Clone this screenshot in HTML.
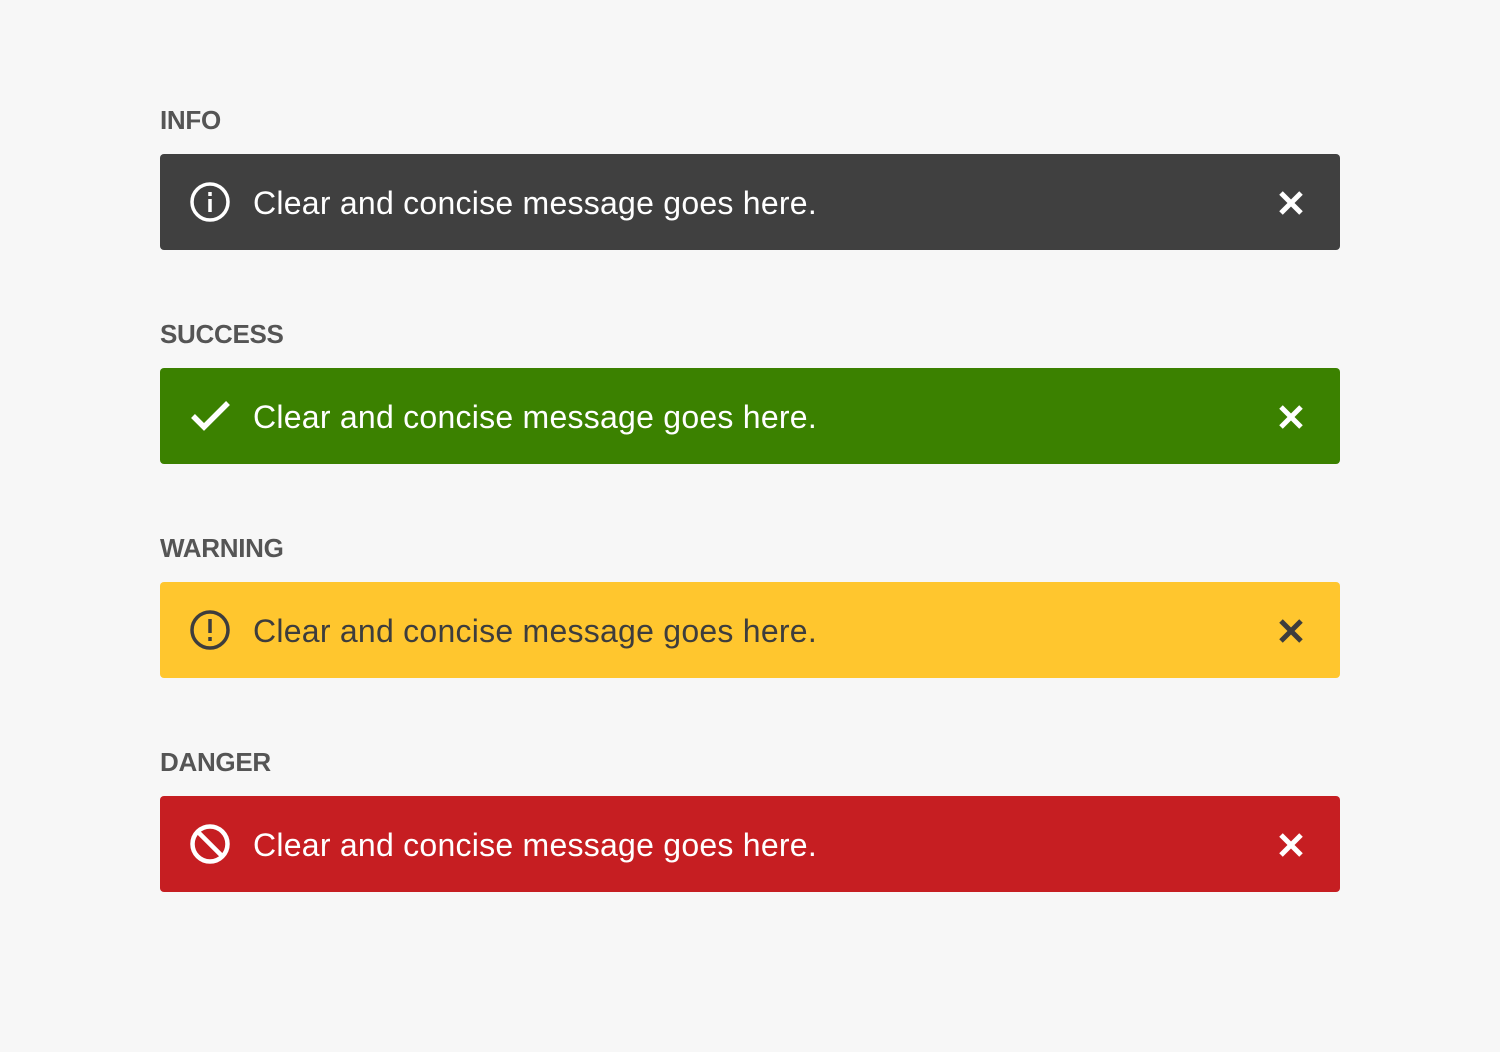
<!DOCTYPE html>
<html><head><meta charset="utf-8"><style>
body{margin:0;background:#f7f7f7;width:1500px;height:1052px;font-family:"Liberation Sans",sans-serif;position:relative}
.lbl{position:absolute;left:160px;font-weight:bold;font-size:26px;color:#555;line-height:1;letter-spacing:-0.3px}
.bar{position:absolute;left:160px;width:1180px;height:96px;border-radius:4px}
.bar svg{position:absolute}
.ic{left:29px;top:27px}
.x{left:1118px;top:36px}
.msg{position:absolute;left:93px;top:1px;line-height:96px;font-size:32px;color:#fff;letter-spacing:0.25px}
</style></head><body>
<div class="lbl" style="top:107px">INFO</div>
<div class="bar" style="top:154px;background:#404040">
<svg class="ic" width="42" height="42" viewBox="0 0 42 42" fill="none" stroke="#fff" stroke-width="3.5"><circle cx="21" cy="21" r="18"/><line x1="21" y1="18" x2="21" y2="31"/><line x1="21" y1="11" x2="21" y2="15"/></svg>
<div class="msg">Clear and concise message goes here.</div>
<svg class="x" width="26" height="26" viewBox="0 0 26 26" stroke="#fff" stroke-width="5"><line x1="3" y1="3" x2="23" y2="23"/><line x1="23" y1="3" x2="3" y2="23"/></svg>
</div>
<div class="lbl" style="top:321px">SUCCESS</div>
<div class="bar" style="top:368px;background:#3b8100">
<svg class="ic" width="42" height="42" viewBox="0 0 42 42" fill="none" stroke="#fff" stroke-width="5.5"><polyline points="4,21 15,32 39,8"/></svg>
<div class="msg">Clear and concise message goes here.</div>
<svg class="x" width="26" height="26" viewBox="0 0 26 26" stroke="#fff" stroke-width="5"><line x1="3" y1="3" x2="23" y2="23"/><line x1="23" y1="3" x2="3" y2="23"/></svg>
</div>
<div class="lbl" style="top:535px">WARNING</div>
<div class="bar" style="top:582px;background:#ffc62e">
<svg class="ic" width="42" height="42" viewBox="0 0 42 42" fill="none" stroke="#3d3d3d" stroke-width="3.5"><circle cx="21" cy="21" r="18"/><line x1="21" y1="10" x2="21" y2="24"/><line x1="21" y1="28" x2="21" y2="32"/></svg>
<div class="msg" style="color:#3d3d3d">Clear and concise message goes here.</div>
<svg class="x" width="26" height="26" viewBox="0 0 26 26" stroke="#3d3d3d" stroke-width="5"><line x1="3" y1="3" x2="23" y2="23"/><line x1="23" y1="3" x2="3" y2="23"/></svg>
</div>
<div class="lbl" style="top:749px">DANGER</div>
<div class="bar" style="top:796px;background:#c61e22">
<svg class="ic" width="42" height="42" viewBox="0 0 42 42" fill="none" stroke="#fff" stroke-width="4.5"><circle cx="21" cy="21" r="17.5"/><line x1="9" y1="9" x2="33" y2="33"/></svg>
<div class="msg">Clear and concise message goes here.</div>
<svg class="x" width="26" height="26" viewBox="0 0 26 26" stroke="#fff" stroke-width="5"><line x1="3" y1="3" x2="23" y2="23"/><line x1="23" y1="3" x2="3" y2="23"/></svg>
</div>
</body></html>
